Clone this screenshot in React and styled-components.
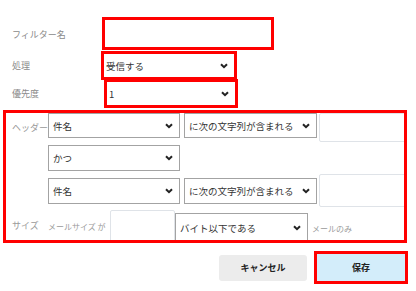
import React from 'react';
import styled, { createGlobalStyle } from 'styled-components';

const GlobalStyle = createGlobalStyle`
  html, body {
    margin: 0;
    padding: 0;
    background: #ffffff;
  }
  body {
    font-family: "Noto Sans CJK JP", "Noto Sans", sans-serif;
    color: #333333;
  }
`;

const Page = styled.div`
  width: 416px;
  height: 291px;
  padding-top: 17px;
  box-sizing: border-box;
  overflow: hidden;
`;

const TopForm = styled.div`
  display: grid;
  grid-template-columns: 90px auto;
  grid-template-rows: 34px 28px 28px;
  padding-left: 12px;
  align-items: start;
`;

const FieldLabel = styled.div`
  font-size: 9px;
  color: #8a8a8a;
  align-self: center;
  line-height: 1;
`;

const NameBox = styled.div`
  width: 172px;
  height: 33px;
  border: 3px solid #ff0000;
  box-sizing: border-box;
  background: #ffffff;
`;

const SelectBox = styled.div`
  display: flex;
  align-items: center;
  justify-content: space-between;
  box-sizing: border-box;
  width: ${(p) => p.$w}px;
  height: ${(p) => p.$h || 26}px;
  margin-top: ${(p) => p.$top || 0}px;
  border: ${(p) => (p.$red ? '3px solid #ff0000' : '1px solid #a3a3a3')};
  background: #ffffff;
  padding: 0 6px 0 ${(p) => (p.$red ? 2 : 4)}px;
  font-size: 9.5px;
  color: #333333;
  flex-shrink: 0;
  white-space: nowrap;
`;

const Chevron = () => (
  <svg width="8" height="6" viewBox="0 0 8 6">
    <polyline points="1,1.2 4,4.2 7,1.2" fill="none" stroke="#222" strokeWidth="2" />
  </svg>
);

function Select({ children, ...rest }) {
  return (
    <SelectBox {...rest}>
      <span>{children}</span>
      <Chevron />
    </SelectBox>
  );
}

const RuleBox = styled.div`
  margin: 3px 0 0 3px;
  width: 404px;
  height: 133px;
  border: 3px solid #ff0000;
  box-sizing: border-box;
  overflow: hidden;
  display: grid;
  grid-template-columns: 42px 1fr;
  grid-template-rows: 29px 26px 33px 1fr;
  row-gap: 3px;
`;

const RuleLabel = styled.div`
  font-size: 9px;
  color: #9a9a9a;
  padding-left: 6px;
  align-self: center;
  white-space: nowrap;
  line-height: 1;
`;

const RuleRow = styled.div`
  grid-column: 2;
  display: flex;
  align-items: ${(p) => p.$align || 'center'};
`;

const TextInput = styled.div`
  box-sizing: border-box;
  width: ${(p) => p.$w}px;
  height: ${(p) => p.$h}px;
  border: 1px solid #dfe3e8;
  border-radius: 2px;
  background: #ffffff;
  flex-shrink: 0;
  margin-left: ${(p) => p.$ml || 0}px;
`;

const Hint = styled.span`
  font-size: 8px;
  color: #9a9a9a;
  white-space: nowrap;
  margin: ${(p) => p.$m || '0'};
`;

const Footer = styled.div`
  display: flex;
  justify-content: flex-end;
  align-items: center;
  gap: 7px;
  padding-right: 8px;
  margin-top: 8px;
`;

const Button = styled.div`
  display: flex;
  align-items: center;
  justify-content: center;
  box-sizing: border-box;
  font-size: 9px;
  font-weight: bold;
  color: #222;
  width: ${(p) => p.$w}px;
  height: ${(p) => p.$h}px;
  background: ${(p) => (p.$primary ? '#d3edfa' : '#ececec')};
  border: ${(p) => (p.$primary ? '3px solid #ff0000' : 'none')};
  border-radius: ${(p) => (p.$primary ? 0 : 3)}px;
`;

export default function App() {
  return (
    <>
      <GlobalStyle />
      <Page>
        <TopForm>
          <FieldLabel>フィルター名</FieldLabel>
          <NameBox />
          <FieldLabel>処理</FieldLabel>
          <Select $w={136} $h={29} $red style={{ marginLeft: -1 }}>受信する</Select>
          <FieldLabel>優先度</FieldLabel>
          <Select $w={134} $h={29} $red style={{ marginLeft: 2 }}>1</Select>
        </TopForm>

        <RuleBox>
          <RuleLabel>ヘッダー</RuleLabel>
          <RuleRow>
            <Select $w={132} $h={25} style={{ alignSelf: 'flex-start' }}>件名</Select>
            <Select $w={133} $h={25} style={{ alignSelf: 'flex-start', marginLeft: 4 }}>に次の文字列が含まれる</Select>
            <TextInput $w={100} $h={29} $ml={2} />
          </RuleRow>

          <RuleRow>
            <Select $w={132} $h={26}>かつ</Select>
          </RuleRow>

          <RuleRow>
            <Select $w={132} $h={26}>件名</Select>
            <Select $w={133} $h={26} style={{ marginLeft: 4 }}>に次の文字列が含まれる</Select>
            <TextInput $w={100} $h={33} $ml={2} />
          </RuleRow>

          <RuleLabel style={{ alignSelf: 'start', paddingTop: 11 }}>サイズ</RuleLabel>
          <RuleRow $align="flex-start">
            <Hint style={{ width: 62, marginTop: 11 }}>メールサイズ が</Hint>
            <TextInput $w={65} $h={40} />
            <Select $w={133} $h={30} $top={3}>バイト以下である</Select>
            <Hint $m="13px 0 0 4px">メールのみ</Hint>
          </RuleRow>
        </RuleBox>

        <Footer>
          <Button $w={88} $h={26}>キャンセル</Button>
          <Button $w={94} $h={33} $primary>保存</Button>
        </Footer>
      </Page>
    </>
  );
}
